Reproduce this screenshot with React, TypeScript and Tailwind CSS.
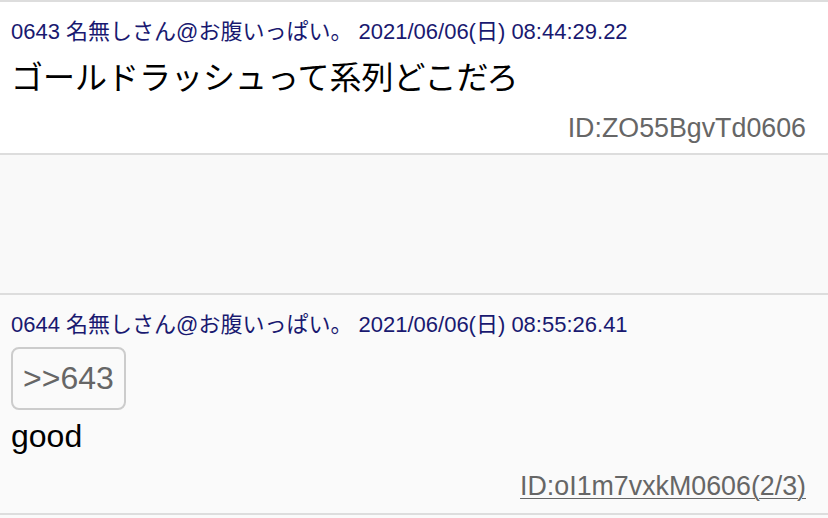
const font = { fontFamily: '"Liberation Sans", "Noto Sans CJK JP", sans-serif' };

type Post = {
  no: string;
  date: string;
  quote?: string;
  body: string;
  id: string;
  link?: boolean;
};

const posts: Post[] = [
  {
    no: '0643',
    date: '2021/06/06(日) 08:44:29.22',
    body: 'ゴールドラッシュって系列どこだろ',
    id: 'ID:ZO55BgvTd0606',
  },
  {
    no: '0644',
    date: '2021/06/06(日) 08:55:26.41',
    quote: '>>643',
    body: 'good',
    id: 'ID:oI1m7vxkM0606(2/3)',
    link: true,
  },
];

function PostItem({ post, white }: { post: Post; white?: boolean }) {
  return (
    <div className={`border-b-2 border-[#dddddd] pl-[11px] pr-[22px] pt-[17px] ${post.quote ? 'pb-[11px]' : 'pb-[9px]'} ${white ? 'bg-white' : 'bg-[#fafafa]'}`}>
      <div className="text-[22px] leading-[26px] text-[#191970]">
        {post.no} 名無しさん@お腹いっぱい。 {post.date}
      </div>
      {post.quote && (
        <div className="mt-[9px] inline-block rounded-lg border-2 border-[#cccccc] px-[10px] py-[8px] text-[32px] leading-[43px] text-[#666666]">
          {post.quote}
        </div>
      )}
      <div className={`${post.quote ? 'mt-[6px]' : 'mt-[13px]'} text-[32px] leading-[40px] text-black`}>{post.body}</div>
      <div className="mt-[14px] text-right text-[26.8px] leading-[32px] text-[#666666]">
        {post.link ? <span className="underline decoration-1 underline-offset-[3px]">{post.id}</span> : post.id}
      </div>
    </div>
  );
}

export default function App() {
  return (
    <div className="min-h-[518px] border-t-2 border-[#dddddd] bg-[#fafafa]" style={font}>
      <PostItem post={posts[0]} white />
      <div className="h-[140px] border-b-2 border-[#dddddd] bg-[#f9f9f9]" />
      <PostItem post={posts[1]} />
    </div>
  );
}
